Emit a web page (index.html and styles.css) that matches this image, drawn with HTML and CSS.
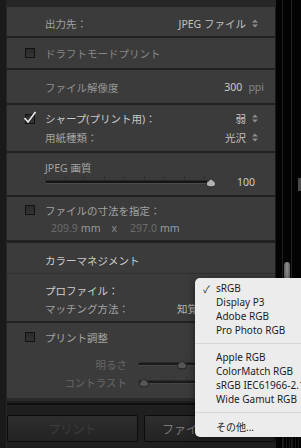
FILE: index.html
```html
<!DOCTYPE html>
<html lang="ja">
<head>
  <meta charset="UTF-8">
  <title>プリントジョブ</title>
  <link rel="stylesheet" href="styles.css">
</head>
<body>

  <div class="app">
    <div class="gutter"></div>

    <div class="main">
      <div class="panel">

        <div class="row r1">
          <div class="line">
            <span class="label">出力先：</span>
            <span class="value">JPEG ファイル<svg class="ud" width="6" height="9" viewBox="0 0 6 9"><path d="M0 3.6L3 0.6L6 3.6ZM0 5.4L3 8.4L6 5.4Z"/></svg></span>
          </div>
        </div>

        <div class="row r2">
          <div class="line chk">
            <span class="box"></span>
            <span class="label dim">ドラフトモードプリント</span>
          </div>
        </div>

        <div class="row r3">
          <div class="line">
            <span class="label mid">ファイル解像度</span>
            <span class="value res"><span class="num">300</span><span class="unit">ppi</span></span>
          </div>
        </div>

        <div class="row r4">
          <div class="line chk">
            <span class="box on"><svg class="tick" width="14" height="13" viewBox="0 0 14 13"><path d="M1.5 7L5 11L12.5 1"/></svg></span>
            <span class="label hi">シャープ(プリント用)：</span>
            <span class="value">弱<svg class="ud" width="6" height="9" viewBox="0 0 6 9"><path d="M0 3.6L3 0.6L6 3.6ZM0 5.4L3 8.4L6 5.4Z"/></svg></span>
          </div>
          <div class="line gap3">
            <span class="label">用紙種類：</span>
            <span class="value">光沢<svg class="ud" width="6" height="9" viewBox="0 0 6 9"><path d="M0 3.6L3 0.6L6 3.6ZM0 5.4L3 8.4L6 5.4Z"/></svg></span>
          </div>
        </div>

        <div class="row r5">
          <div class="line">
            <span class="label">JPEG 画質</span>
          </div>
          <div class="line slide">
            <svg class="slider" width="172" height="12" viewBox="0 0 172 12">
              <g fill="#2b2b2b">
                <rect x="0" y="0.5" width="1" height="2"/><rect x="20" y="0.5" width="1" height="2"/>
                <rect x="39" y="0.5" width="1" height="2"/><rect x="59" y="0.5" width="1" height="2"/>
                <rect x="79" y="0.5" width="1" height="2"/><rect x="99" y="0.5" width="1" height="2"/>
                <rect x="119" y="0.5" width="1" height="2"/><rect x="139" y="0.5" width="1" height="2"/>
                <rect x="159" y="0.5" width="1" height="2"/>
              </g>
              <rect x="0.5" y="4.5" width="168" height="2.5" rx="1.2" fill="#151515"/>
              <rect x="1" y="7" width="167" height="1" fill="#4c4c4c"/>
              <path d="M166 2.8C167.2 4.2 170.6 5.6 170.6 8C170.6 9.9 168.6 10.8 166 10.8C163.4 10.8 161.4 9.9 161.4 8C161.4 5.6 164.8 4.2 166 2.8Z" fill="#b3b3b3" stroke="#1c1c1c" stroke-width="0.8"/>
            </svg>
            <span class="num q">100</span>
          </div>
        </div>

        <div class="row r6">
          <div class="line chk">
            <span class="box"></span>
            <span class="label">ファイルの寸法を指定：</span>
          </div>
          <div class="line gap2 size">
            <span class="faint">209.9</span><span class="mm">mm</span><span class="x">x</span><span class="faint n2">297.0</span><span class="mm">mm</span>
          </div>
        </div>

        <div class="row r7">
          <div class="line">
            <span class="label head">カラーマネジメント</span>
          </div>
        </div>

        <div class="row r8">
          <div class="line">
            <span class="label top">プロファイル：</span>
          </div>
          <div class="line gap2">
            <span class="label">マッチング方法：</span>
            <span class="pick">知覚</span>
          </div>
        </div>

        <div class="row r9">
          <div class="line chk">
            <span class="box"></span>
            <span class="label">プリント調整</span>
          </div>
          <div class="line adjline gap11">
            <span class="adj">明るさ</span>
            <svg class="slider" width="144" height="12" viewBox="0 0 144 12">
              <g fill="#303030">
                <rect x="0" y="0.5" width="1" height="2"/><rect x="12" y="0.5" width="1" height="2"/>
                <rect x="24" y="0.5" width="1" height="2"/><rect x="36" y="0.5" width="1" height="2"/>
                <rect x="48" y="0.5" width="1" height="2"/><rect x="60" y="0.5" width="1" height="2"/>
              </g>
              <rect x="0.5" y="4.5" width="143" height="2.5" rx="1.2" fill="#1b1b1b"/>
              <rect x="1" y="7" width="142" height="1" fill="#454545"/>
              <path d="M44 2.8C45.2 4.2 48.6 5.6 48.6 8C48.6 9.9 46.6 10.8 44 10.8C41.4 10.8 39.4 9.9 39.4 8C39.4 5.6 42.8 4.2 44 2.8Z" fill="#555" stroke="#1c1c1c" stroke-width="0.8"/>
            </svg>
          </div>
          <div class="line adjline gap2">
            <span class="adj">コントラスト</span>
            <svg class="slider" width="144" height="12" viewBox="0 0 144 12">
              <g fill="#303030">
                <rect x="12" y="0.5" width="1" height="2"/><rect x="24" y="0.5" width="1" height="2"/>
                <rect x="36" y="0.5" width="1" height="2"/><rect x="48" y="0.5" width="1" height="2"/>
                <rect x="60" y="0.5" width="1" height="2"/>
              </g>
              <rect x="0.5" y="4.5" width="143" height="2.5" rx="1.2" fill="#1b1b1b"/>
              <rect x="1" y="7" width="142" height="1" fill="#454545"/>
              <path d="M6 2.8C7.2 4.2 10.6 5.6 10.6 8C10.6 9.9 8.6 10.8 6 10.8C3.4 10.8 1.4 9.9 1.4 8C1.4 5.6 4.8 4.2 6 2.8Z" fill="#555" stroke="#1c1c1c" stroke-width="0.8"/>
            </svg>
          </div>
        </div>

      </div>

      <div class="footer">
        <div class="rule"></div>
        <div class="buttons">
          <button class="btn off">プリント</button>
          <button class="btn file">ファイルへプリント...</button>
        </div>
      </div>
    </div>

    <div class="rail">
      <div class="rcol"></div>
      <div class="rline"></div>
      <div class="track"><div class="thumb"></div></div>
      <div class="rline"></div>
      <div class="rcol"></div>
      <div class="tabcol"><div class="tab"></div></div>
    </div>
  </div>

  <div class="menu">
    <div class="item"><span class="check">✓</span>sRGB</div>
    <div class="item"><span class="check"></span>Display P3</div>
    <div class="item"><span class="check"></span>Adobe RGB</div>
    <div class="item"><span class="check"></span>Pro Photo RGB</div>
    <div class="sep"></div>
    <div class="item"><span class="check"></span>Apple RGB</div>
    <div class="item"><span class="check"></span>ColorMatch RGB</div>
    <div class="item"><span class="check"></span>sRGB IEC61966-2.1</div>
    <div class="item"><span class="check"></span>Wide Gamut RGB</div>
    <div class="sep"></div>
    <div class="item"><span class="check"></span>その他...</div>
  </div>

</body>
</html>
```

FILE: styles.css
```css
* {
  box-sizing: border-box;
}

body {
  margin: 0;
  width: 301px;
  height: 448px;
  overflow: hidden;
  position: relative;
  background: #1f1f1f;
  font-family: "Noto Sans", "Noto Sans CJK JP", sans-serif;
  font-size: 10.5px;
  color: #a2a2a2;
}

.app {
  display: flex;
  height: 448px;
}

.gutter {
  width: 7px;
  background: #1a1a1a;
  border-right: 1px solid #262626;
}

.main {
  width: 269px;
  display: flex;
  flex-direction: column;
  background: #262626;
  padding-top: 7px;
}

.panel {
  background: #3b3b3b;
  border-right: 1px solid #1b1b1b;
}

.row {
  display: flex;
  flex-direction: column;
  border-bottom: 2px solid #212121;
}

.r1 { height: 31px; padding-top: 8px; }
.r2 { height: 32px; padding-top: 7px; }
.r3 { height: 35px; padding-top: 9px; }
.r4 { height: 48px; padding-top: 5px; }
.r5 { height: 44px; padding-top: 6px; }
.r6 { height: 46px; padding-top: 5px; border-bottom-width: 3px; }
.r7 { height: 31px; padding-top: 9px; border-bottom: 1px solid #303030; }
.r8 { height: 49px; padding-top: 8px; }
.r9 { height: 75px; padding-top: 6px; border-bottom: none; }

.line {
  display: flex;
  align-items: center;
  height: 16px;
  padding-left: 38px;
  padding-right: 17px;
  white-space: nowrap;
}

.line.chk {
  padding-left: 18px;
}

.line.adjline {
  padding-right: 0;
}

.gap2 { margin-top: 2px; }
.gap3 { margin-top: 3px; }
.gap11 { margin-top: 11px; }

.box {
  position: relative;
  flex: none;
  width: 10px;
  height: 10px;
  margin-right: 10px;
  border: 1px solid #121212;
  background: linear-gradient(#2a2a2a, #343434);
}

.box.on {
  margin-top: 1px;
}

.tick {
  position: absolute;
  left: -3px;
  top: -4px;
  fill: none;
  stroke: #e6e6e6;
  stroke-width: 1.7;
}

.label.dim { color: #868686; }
.label.mid { color: #939393; }
.label.hi { color: #c8c8c8; }
.label.head { color: #c9c9c9; }
.label.top { color: #d0d0d0; }

.value {
  margin-left: auto;
  display: flex;
  align-items: center;
  color: #c2c2c2;
}

.ud {
  margin-left: 6px;
  fill: #8e8e8e;
}

.value.res {
  margin-right: -6px;
}

.num {
  color: #cbcbcb;
}

.unit {
  margin-left: 6px;
  color: #888;
}

.slide {
  height: 14px;
}

.slider {
  flex: none;
}

.num.q {
  margin-left: 20px;
}

.size {
  padding-left: 44px;
}

.faint { color: #6b6b6b; }
.mm { margin-left: 3px; color: #9a9a9a; }
.x { margin-left: 11px; color: #8a8a8a; }
.n2 { margin-left: 13px; }

.pick {
  margin-left: auto;
  width: 81px;
  color: #b5b5b5;
}

.adj {
  flex: none;
  width: 82px;
  text-align: right;
  margin-right: 11px;
  color: #676767;
}

.footer {
  flex: 1;
  background: #1f1f1f;
  border-top: 3px solid #2a2a2a;
}

.rule {
  height: 2px;
  margin-top: 2px;
  background: #0e0e0e;
}

.buttons {
  display: flex;
  gap: 6px;
  margin-top: 10px;
  padding-right: 1px;
}

.btn {
  width: 131px;
  height: 27px;
  border: 1px solid #0c0c0c;
  border-radius: 2px;
  background: linear-gradient(#2e2e2e, #232323);
  font-family: "Noto Sans CJK JP", sans-serif;
  font-size: 12px;
  color: #7a7a7a;
  padding: 0;
  white-space: nowrap;
  overflow: hidden;
}

.btn.off {
  color: #3c3c3c;
}

.btn.file {
  text-align: left;
  padding-left: 17px;
}

.rail {
  flex: 1;
  display: flex;
  background: #030303 repeating-linear-gradient(90deg, #1c1c1c 0 1px, #030303 1px 3px) right bottom / 18px 16px no-repeat;
}

.rcol {
  width: 6px;
}

.rline {
  width: 1px;
  background: #222;
}

.track {
  width: 8px;
}

.thumb {
  margin: 262px 1px 0;
  height: 20px;
  border-radius: 3px;
  background: linear-gradient(90deg, #5c5c5c, #8d8d8d, #5c5c5c);
}

.tabcol {
  width: 3px;
}

.tab {
  margin-top: 178px;
  height: 13px;
  background: #4a4a4a;
}

.menu {
  position: absolute;
  left: 195px;
  top: 278px;
  width: 130px;
  padding: 3px 0 4px;
  background: #ececec;
  border-radius: 5px;
  box-shadow: 0 2px 8px rgba(0, 0, 0, 0.5);
  font-family: "Noto Sans", "Noto Sans CJK JP", sans-serif;
  font-size: 10px;
  color: #1c1c1c;
}

.item {
  display: flex;
  align-items: center;
  height: 14px;
  padding-left: 8px;
  white-space: nowrap;
}

.check {
  width: 13px;
  font-size: 10px;
}

.sep {
  height: 1px;
  margin: 6px 0;
  background: #d6d6d6;
}
```
